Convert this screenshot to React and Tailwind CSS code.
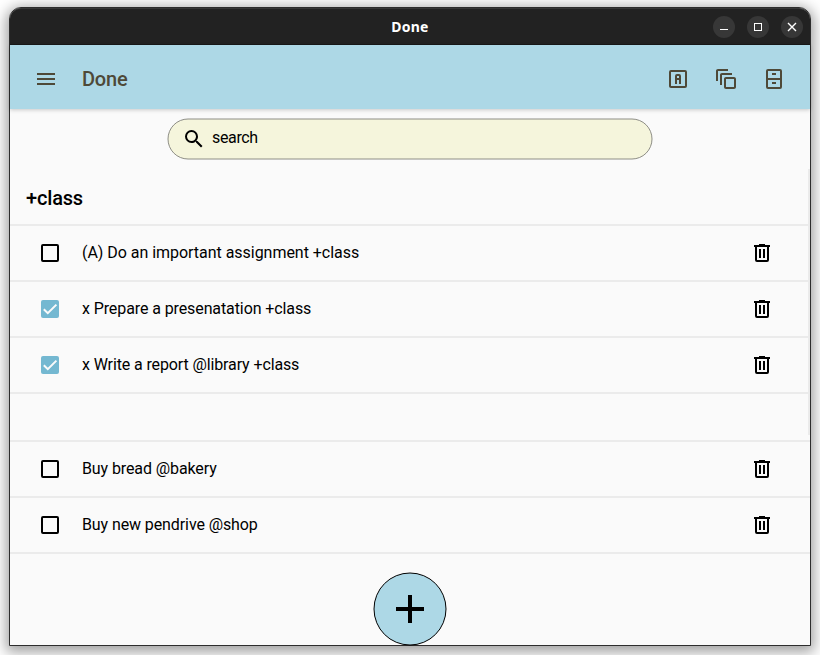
const ICONS = {
  menu: 'M3,6H21V8H3V6M3,11H21V13H3V11M3,16H21V18H3V16Z',
  priority:
    'M3,5A2,2 0 0,1 5,3H19A2,2 0 0,1 21,5V19A2,2 0 0,1 19,21H5C3.89,21 3,20.1 3,19V5M5,5V19H19V5H5M11,7H13A2,2 0 0,1 15,9V17H13V13H11V17H9V9A2,2 0 0,1 11,7M11,9V11H13V9H11Z',
  stack:
    'M4,2H14V4H4V14H2V4C2,2.89 2.89,2 4,2M8,6H18V8H8V18H6V8C6,6.89 6.89,6 8,6M12,10H20C21.11,10 22,10.89 22,12V20C22,21.11 21.11,22 20,22H12C10.89,22 10,21.11 10,20V12C10,10.89 10.89,10 12,10M12,12V20H20V12H12Z',
  cabinet:
    'M14,8H10V6H14V8M20,4V20A2,2 0 0,1 18,22H6A2,2 0 0,1 4,20V4A2,2 0 0,1 6,2H18A2,2 0 0,1 20,4M18,4H6V11H18V4M18,20V13H6V20H18M14,15H10V17H14V15Z',
  search:
    'M9.5,3A6.5,6.5 0 0,1 16,9.5C16,11.11 15.41,12.59 14.44,13.73L14.71,14H15.5L20.5,19L19,20.5L14,15.5V14.71L13.73,14.44C12.59,15.41 11.11,16 9.5,16A6.5,6.5 0 0,1 3,9.5A6.5,6.5 0 0,1 9.5,3M9.5,5C7,5 5,7 5,9.5C5,12 7,14 9.5,14C12,14 14,12 14,9.5C14,7 12,5 9.5,5Z',
  trash:
    'M9,3V4H4V6H5V19A2,2 0 0,0 7,21H17A2,2 0 0,0 19,19V6H20V4H15V3H9M7,6H17V19H7V6M9,8V17H11V8H9M13,8V17H15V8H13Z',
  plus: 'M19,13H13V19H11V13H5V11H11V5H13V11H19V13Z',
};

function Icon({ name, className = 'size-6' }) {
  return (
    <svg viewBox="0 0 24 24" fill="currentColor" className={`shrink-0 ${className}`}>
      <path d={ICONS[name]} />
    </svg>
  );
}

function WindowButton({ children }) {
  return (
    <button className="flex size-[22px] items-center justify-center rounded-full bg-[#373737] text-white">
      <svg viewBox="0 0 22 22" fill="none" stroke="currentColor" className="size-[22px]">
        {children}
      </svg>
    </button>
  );
}

function Checkbox({ checked }) {
  if (!checked) return <span className="size-[18px] rounded-[2px] border-2 border-black" />;
  return (
    <span className="size-[18px] rounded-[2px] bg-[#74b8d1]">
      <svg viewBox="0 0 18 18" fill="none" stroke="#fafafa" strokeWidth="2" className="size-[18px]">
        <path d="M2.8 9.2L6.8 13.2L15.4 4.6" />
      </svg>
    </span>
  );
}

function Task({ text, checked, tracking = 'tracking-[-0.1px]' }) {
  return (
    <li className="flex h-14 items-center border-b-2 border-[#ebebeb] pr-9 pl-[31px]">
      <Checkbox checked={checked} />
      <span className={`ml-[23px] flex-1 text-base leading-6 ${tracking}`}>{text}</span>
      <button>
        <Icon name="trash" />
      </button>
    </li>
  );
}

export default function App() {
  return (
    <div className="h-[655px] w-[820px] overflow-hidden bg-white px-[9px] pt-[7px] font-[Roboto,sans-serif] text-black">
      <div className="relative flex h-[639px] w-[802px] flex-col rounded-t-[12px] border border-[#2d2d2d] bg-[#fafafa] shadow-[0_3px_14px_3px_rgba(0,0,0,0.38)]">
        <header className="grid h-[37px] shrink-0 grid-cols-[1fr_auto_1fr] items-center rounded-t-[11px] border-t border-b border-t-[#373737] border-b-[#191919] bg-[#222222]">
          <span />
          <h1 className="pt-px font-['Noto_Sans',sans-serif] text-[14px] leading-5 font-bold tracking-[0.25px] text-white">
            Done
          </h1>
          <div className="flex justify-end gap-3 pr-[7px]">
            <WindowButton>
              <path d="M7 13.5H15" />
            </WindowButton>
            <WindowButton>
              <rect x="7.5" y="7.5" width="7" height="7" />
            </WindowButton>
            <WindowButton>
              <path d="M7 7L15 15M15 7L7 15" strokeWidth="1.4" />
            </WindowButton>
          </div>
        </header>
        <nav className="flex h-16 shrink-0 items-center bg-[#add8e6] px-6 pt-1 text-[#4e4938] shadow-[0_1px_4px_rgba(0,0,0,0.2)]">
          <Icon name="menu" />
          <h2 className="ml-6 flex-1 text-[20px] leading-8 font-medium tracking-[-0.2px]">Done</h2>
          <div className="flex gap-6">
            <Icon name="priority" />
            <Icon name="stack" />
            <Icon name="cabinet" />
          </div>
        </nav>
        <div className="flex h-[60px] shrink-0 justify-center pt-[9px]">
          <div className="relative flex h-[42px] w-[486px] items-center pl-[15px]">
            <svg viewBox="0 0 486 42" className="absolute inset-0 h-[42px] w-[486px]">
              <rect x="1" y="1" width="484" height="40" rx="20" fill="#f5f5dc" stroke="#8e8e86" />
            </svg>
            <Icon name="search" className="relative size-6" />
            <span className="relative ml-1.5 pb-[3px] text-base leading-6 tracking-[-0.35px]">search</span>
          </div>
        </div>
        <main className="relative">
          <h3 className="flex h-[57px] items-center border-b-2 border-[#ebebeb] pt-0.5 pl-4 text-[20px] leading-8 font-medium tracking-[-0.17px]">
            +class
          </h3>
          <ul>
            <Task text="(A) Do an important assignment +class" tracking="tracking-[-0.035px]" />
            <Task text="x Prepare a presenatation +class" checked />
            <Task text="x Write a report @library +class" checked tracking="tracking-[-0.12px]" />
          </ul>
          <div className="h-12 border-b-2 border-[#ebebeb]" />
          <ul>
            <Task text="Buy bread @bakery" />
            <Task text="Buy new pendrive @shop" />
          </ul>
          <span className="absolute top-0 right-0 h-[266px] w-0.5 bg-[#ebebeb]" />
        </main>
        <button className="absolute -bottom-px left-[363px] size-[74px]">
          <svg viewBox="0 0 74 74" className="size-[74px]">
            <circle cx="37" cy="37" r="36" fill="#add8e6" stroke="#000" />
            <path d="M23 37H51M37 23V51" stroke="#000" strokeWidth="4" />
          </svg>
        </button>
      </div>
    </div>
  );
}
